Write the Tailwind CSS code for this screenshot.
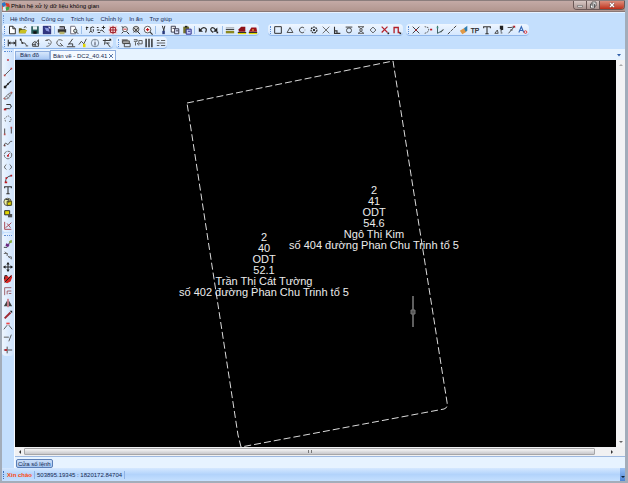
<!DOCTYPE html>
<html lang="vi">
<head>
<meta charset="utf-8">
<title>Phân hệ xử lý dữ liệu không gian</title>
<script src="https://cdn.jsdelivr.net/npm/@tailwindcss/browser@4"></script>
</head>
<body class="h-screen flex flex-col overflow-hidden bg-[#c4dffd] font-['Liberation_Sans',sans-serif] text-[6px] leading-[8px] text-[#142850] border-l-2 border-r-[3px] border-b-2 border-[#a3adba]">
<header class="-ml-[2px] -mr-[3px] h-[12px] shrink-0 flex items-center bg-linear-to-b from-[#c4aaa6] to-[#b2968f] border-t border-t-[#8b7d7c] border-b border-b-[#8a7876] pr-[3px]">
  <svg class="size-[11px]" viewBox="0 0 12 12" aria-hidden="true"><path d="M1 3l4-2 2 3-4 3z" fill="#2c77c8"/><path d="M6 2l4 1 1 4-4-1z" fill="#d93a26"/><path d="M2 7l4-1 2 4-4 1z" fill="#e8e9ee"/><path d="M6 7l4-1 0 3-3 2z" fill="#3aa344"/><path d="M0 5l3 0 0 4-2 0z" fill="#e24a31"/></svg>
  <h1 class="whitespace-nowrap text-black">Phân hệ xử lý dữ liệu không gian</h1>
  <div class="ml-auto flex h-[9px] self-start rounded-b-sm overflow-hidden border border-t-0 border-[#6a5755]">
    <button aria-label="Thu nhỏ" class="w-[13px] bg-linear-to-b from-[#d8c8c5] to-[#a99490] border-r border-[#6a5755] flex items-center justify-center"><svg class="size-[8px]" viewBox="0 0 8 8"><path d="M1.500 4.500h5v1.500h-5z" fill="#fff" stroke="#444" stroke-width=".5"/></svg></button>
    <button aria-label="Khôi phục" class="w-[13px] bg-linear-to-b from-[#d8c8c5] to-[#a99490] border-r border-[#6a5755] flex items-center justify-center"><svg class="size-[8px]" viewBox="0 0 8 8"><path d="M3 1h4v4H3zM1.500 3h4v4h-4z" fill="#fff" stroke="#444" stroke-width=".8"/></svg></button>
    <button aria-label="Đóng" class="w-[24px] bg-linear-to-b from-[#dc8c7b] to-[#bd2c16] flex items-center justify-center"><svg class="size-[8px]" viewBox="0 0 8 8"><path d="M2 2l4 4M6 2L2 6" stroke="#60332e" stroke-width="2.400"/><path d="M2 2l4 4M6 2L2 6" stroke="#fff" stroke-width="1.500"/></svg></button>
  </div>
</header>

<nav class="h-[12px] shrink-0 flex items-center gap-[7px] pl-px whitespace-nowrap border-t border-[#e7f1fe]" aria-label="Trình đơn">
  <span class="h-[8px] border-l border-dotted border-[#6f9ad8] -mr-px"></span>
  <button>Hệ thống</button><button>Công cụ</button><button>Trích lục</button><button>Chỉnh lý</button><button>In ấn</button><button>Trợ giúp</button>
</nav>

<div class="h-[12px] shrink-0 flex">
  <div role="toolbar" aria-label="Chuẩn" class="w-[257px] mr-[9px] flex items-center rounded-sm bg-linear-to-b from-[#eef6ff] to-[#d5e7fd] border-b border-[#8fb6ea]" data-icons="new open save image | print preview | pan zoomwin zoomin zoomout zoomall zoom | cut copy paste | undo redo | layer red1 red2"></div>
  <div role="toolbar" aria-label="Bắt điểm" class="w-[135px] mr-[3px] flex items-center rounded-sm bg-linear-to-b from-[#eef6ff] to-[#d5e7fd] border-b border-[#8fb6ea]" data-icons="square tri circle node cross perp tangent hour diamond nosnap magnet"></div>
  <div role="toolbar" aria-label="Biên tập" class="w-[123px] flex items-center rounded-sm bg-linear-to-b from-[#eef6ff] to-[#d5e7fd] border-b border-[#8fb6ea]" data-icons="x curve vert slash brush tp text north arrowred letter"></div>
</div>
<div class="h-[12px] mt-px shrink-0 flex">
  <div role="toolbar" aria-label="Đo đạc" class="w-[111px] mr-[3px] flex items-center rounded-sm bg-linear-to-b from-[#eef6ff] to-[#d5e7fd] border-b border-[#8fb6ea]" data-icons="dim poly area arcl arcr angle spark info move2"></div>
  <div role="toolbar" aria-label="Lớp" class="w-[51px] flex items-center rounded-sm bg-linear-to-b from-[#eef6ff] to-[#d5e7fd] border-b border-[#8fb6ea]" data-icons="stack link bars lines"></div>
</div>

<div class="flex-1 min-h-0 flex">
  <aside class="w-[12px] shrink-0 flex flex-col">
    <div role="toolbar" aria-label="Vẽ" class="h-[183px] flex flex-col items-center rounded-sm bg-linear-to-r from-[#eef6ff] to-[#cde2fc]" data-vertical data-icons="dot line line2 hatch loop poly5 rect wave circ ell arc text group group2 graph"></div>
    <div role="toolbar" aria-label="Sửa" class="mt-px h-[123px] flex flex-col items-center rounded-sm bg-linear-to-r from-[#eef6ff] to-[#cde2fc]" data-vertical data-icons="erase copy2 move rotate offset mirror scale trim extend break"></div>
  </aside>
  <main class="flex-1 min-w-0 flex flex-col border-l border-[#f7fbff]">
    <div class="h-[11px] shrink-0 flex items-end bg-[#e7f3ff] whitespace-nowrap">
      <button class="w-[35px] h-[9px] pl-[4px] text-left leading-[7px] border border-[#8eaede] bg-linear-to-b from-[#d7e7fb] to-[#a9c9f4]">Bản đồ</button>
      <button class="h-[10px] pl-[2px] pr-px gap-px flex items-center border border-b-0 border-[#8eaede] bg-[#f5faff]">Bản vẽ - DC2_40.41<svg class="size-[6px] shrink-0" viewBox="0 0 6 6"><path d="M1 1l4 4M5 1L1 5" stroke="#5b79aa"/></svg></button>
      <button aria-label="Danh sách thẻ" class="ml-auto mr-[4px] mb-[3px]"><svg class="size-[4px]" viewBox="0 0 4 4"><path d="M0 1h4L2 3.500z" fill="#315fa8"/></svg></button>
    </div>
    <div class="flex-1 min-h-0 flex">
      <div class="flex-1 min-w-0 bg-black overflow-hidden">
        <svg class="block w-full h-full" viewBox="0 0 601 387" preserveAspectRatio="xMinYMin slice" role="img" aria-label="Bản vẽ thửa đất">
          <g fill="none" stroke="#dcdcdc" stroke-dasharray="7 3"><path d="M172 43L378 1L432 342Q433 348 429 349L226 387L223 375Z"/></g>
          <g class="fill-[#ececec] text-[11px]" text-anchor="middle">
            <text><tspan x="359" y="134">2</tspan><tspan x="359" y="145">41</tspan><tspan x="359" y="156">ODT</tspan><tspan x="359" y="167">54.6</tspan><tspan x="359" y="178">Ngô Thị Kim</tspan><tspan x="359" y="189">số 404 đường Phan Chu Trinh tổ 5</tspan></text>
            <text><tspan x="249" y="181">2</tspan><tspan x="249" y="192">40</tspan><tspan x="249" y="203">ODT</tspan><tspan x="249" y="214">52.1</tspan><tspan x="249" y="225">Trần Thị Cát Tường</tspan><tspan x="249" y="236">số 402 đường Phan Chu Trinh tổ 5</tspan></text>
          </g>
          <path d="M398 236v31" stroke="#929292" stroke-width="1.300"/><path d="M396 250h4v4h-4z" fill="#555" stroke="#777"/>
        </svg>
      </div>
      <div class="w-[9px] shrink-0 bg-[#f3f3f4] flex flex-col justify-between items-center py-[3px]">
        <button aria-label="Cuộn lên"><svg class="size-[4px]" viewBox="0 0 4 4"><path d="M0 3h4L2 1z" fill="#aaa"/></svg></button>
        <button aria-label="Cuộn xuống"><svg class="size-[4px]" viewBox="0 0 4 4"><path d="M0 1h4L2 3z" fill="#666"/></svg></button>
      </div>
    </div>
    <div class="h-[9px] shrink-0 flex items-center bg-[#f1f1f2] pl-[3px] pr-[11px]">
      <button aria-label="Cuộn trái"><svg class="size-[4px]" viewBox="0 0 4 4"><path d="M3 0v4L1 2z" fill="#333"/></svg></button>
      <div class="ml-[2px] mr-[15px] flex-1 h-[7px] rounded-[1px] border border-[#a6a6a8] bg-linear-to-b from-[#f7f7f7] to-[#c6c6ca] flex items-center justify-center"><span class="h-[3px] w-[4px] border-x border-[#777]"></span></div>
      <button aria-label="Cuộn phải"><svg class="size-[4px]" viewBox="0 0 4 4"><path d="M1 0v4l2-2z" fill="#333"/></svg></button>
    </div>
    <div class="h-[12px] shrink-0 border-t border-[#9eb9e0] bg-[#e7f3ff] pl-px pt-[2px]">
      <button class="h-[9px] px-px flex items-center justify-center whitespace-nowrap rounded-[2px] border border-[#5b7fb8] bg-linear-to-b from-[#cbdff8] to-[#a5c5ef]">Cửa sổ lệnh</button>
    </div>
  </main>
</div>
<footer class="h-[13px] shrink-0 flex items-center whitespace-nowrap bg-linear-to-b from-[#d5e8ff] via-[#b2d3fb] to-[#c5e0ff]">
  <span class="h-[8px] ml-px border-l border-dotted border-[#3e6fb8]"></span>
  <span class="ml-[3px] w-[27px] text-[#ff4a10] font-bold">Xin chào</span>
  <span class="px-[2px] border-x border-[#8db2e6]">503895.19345 : 1820172.84704</span>
  <button aria-label="Tùy chọn" class="ml-auto w-[5px] h-full bg-linear-to-b from-[#9cc2f5] to-[#4d86d6] flex items-end justify-center pb-[2px]"><svg class="size-[4px]" viewBox="0 0 4 4"><path d="M0 1h4L2 3z" fill="#123"/></svg></button>
</footer>

<script>
const s = (d, c = '#222', w = 1.1) => `<path d="${d}" fill="none" stroke="${c}" stroke-width="${w}"/>`;
const f = (d, c = '#222') => `<path d="${d}" fill="${c}"/>`;
const R = '#c01820', Y = '#e3d600';
const icons = {
  new: ['Mới', f('M3 1.500h4l3 3v6H3z', '#fff') + s('M3 1.500h4l3 3v6H3zM7 1.500v3h3')],
  open: ['Mở', f('M1 4h3l1 1h4v5H1z', '#5b5510') + f('M3 6h8l-2 4H1z', '#c9c022') + s('M7 3q2-2 3 0')],
  save: ['Lưu', f('M1.500 1.500h9v9h-9z', '#245b58') + f('M3.500 1.500h5v4h-5z', '#e9f3f3') + f('M4 7.500h4v3H4z', '#111')],
  image: ['Ảnh', f('M1 1h10v10H1z', '#30357f') + f('M3 3l5 1 1 4-4-1z', '#8c98df') + f('M7 2l3 0 0 3z', '#dde')],
  print: ['In', f('M1 5h10v4H1z', '#333') + f('M3 2h6v3H3z', '#99a') + f('M3 8h6v3H3z', '#b7b36b') + s('M3 2h6v3')],
  preview: ['Xem trước', f('M2 1h6v10H2z', '#fff') + s('M2 1.500h5l1 2v7H2z', '#667') + '<circle cx="7.500" cy="7" r="2" fill="#cdd" stroke="#333"/>' + s('M9 8.500l2 2')],
  pan: ['Kéo', s('M1 3h3M2 2v4M6 4q3-3 5-1M7 4v3M5 9q2-3 4 0M10 5v3', '#333', 1.2)],
  zoomwin: ['Phóng vùng', s('M1 3h2M1 6h3M9 1v4M7 3h4M5 7l2-1 3 3M2 9h3', '#333', 1.2)],
  zoomin: ['Phóng to', f('M1 1h10v10H1z', '#efd0d4') + s('M6 1v10M1 6h10M3 3h6v6H3z', '#a32833', 1.2)],
  zoomout: ['Thu nhỏ', '<circle cx="6" cy="5" r="3" fill="#fff" stroke="#444"/>' + s('M4 5h4', R) + s('M8 8l3 3M2 2l2 1M2 10l2-2')],
  zoomall: ['Toàn bộ', '<circle cx="6" cy="5" r="3.500" fill="#ccc" stroke="#444"/>' + s('M3 3l6 6M9 3L3 9', '#444', 1.1) + s('M8 8l3 3')],
  zoom: ['Phóng', '<circle cx="5.500" cy="5.500" r="4" fill="#fff" stroke="#444"/>' + s('M3.500 5.500h4M5.500 3.500v4', R, 1.3) + s('M8.500 8.500l3 3', '#333', 1.4)],
  cut: ['Cắt', s('M4 1l2 6M7 1L5.500 7', '#333', 1.2) + f('M4 7h3v4H4z', '#28397b')],
  copy: ['Sao chép', f('M1.500 1.500h6v7h-6z', '#fff') + s('M1.500 1.500h5v7h-5zM3 4h3', '#334') + f('M5.500 4.500h6v6h-6z', '#dfe6ff') + s('M5.500 4.500h5v6h-5zM7 7h3', '#334')],
  paste: ['Dán', f('M1.500 2h7v8h-7z', '#77742c') + f('M3.500 1h3v2h-3z', '#222') + f('M5 5h6v6H5z', '#ccd4fa') + s('M5 5h6v6H5zM7 7.500h3', '#228')],
  undo: ['Hoàn tác', s('M3 6q4-5 7-1 0 2-1 4', '#333', 1.5) + f('M1 3v5h5z')],
  redo: ['Làm lại', s('M8 6Q4 1 2 5q0 2 3 4', '#333', 1.5) + f('M10 3v5H5z') + f('M9 8h2v2H9z')],
  layer: ['Lớp', f('M1 3h10v1H1z', '#888') + f('M1 5h10v1H1z') + f('M1 7h10v3H1z', '#8b8820')],
  red1: ['Thửa', f('M1 9h10v2H1z', Y) + f('M2 8V5l3-3h5v6z', '#8d1118') + s('M1 9h10')],
  red2: ['Nhà', f('M1 9h10v2H1z', Y) + f('M1 8l3-5h6l1 5z', '#9d1118') + f('M5 5h2v2H5z', '#e8b040') + s('M1 9h10')],
  square: ['Đầu mút', s('M2 2h8v8H2z', '#333', 1.2)],
  tri: ['Trung điểm', s('M6 3L2.500 9h7z', '#444')],
  circle: ['Tâm', s('M8.500 3.500Q6 1.500 4 3.500Q1.500 6 4 8.500Q6 10.500 8.500 8.500', '#444') + s('M9.500 5.500v1', '#888')],
  node: ['Nút', '<circle cx="6" cy="6" r="3.500" fill="none" stroke="#222" stroke-width="1.400" stroke-dasharray="2 1"/>' + s('M4.500 4.500l3 3M7.500 4.500l-3 3')],
  cross: ['Giao điểm', s('M2 2l8 8M10 2l-8 8', '#666')],
  perp: ['Vuông góc', s('M3 2v8h7M3 7h3v3', '#333', 1.3)],
  tangent: ['Tiếp tuyến', s('M2 2.500h8', '#333') + '<circle cx="6" cy="6.500" r="3" fill="none" stroke="#333"/>'],
  hour: ['Gần nhất', s('M2.500 2h7L4 6l5.500 4h-7L8 6z', '#555')],
  diamond: ['Góc phần tư', s('M6 2.500L9.500 6 6 9.500 2.500 6z', '#555')],
  nosnap: ['Bỏ bắt điểm', s('M2 2l7 7M9 2L2 9', '#b3202a', 1.4) + f('M9 9h2v2H9z')],
  magnet: ['Nam châm', s('M2.500 10V3h5v6h2', '#b3202a', 1.6) + f('M9 9h2v2H9z')],
  x: ['Giao', s('M2 2l8 8M10 2l-8 8', '#333') + f('M5 5h2v2H5z', R)],
  curve: ['Đường cong', '<path d="M2 2l4 1 1 3-2 3-3 1" fill="none" stroke="#444" stroke-dasharray="2 1"/>' + f('M8.500 4.500h2.500v2H8.500z', R)],
  vert: ['Đỉnh', s('M3 1v9l7-4', '#355') + f('M2 2h2v2H2z', '#3a8e7b') + s('M7 9l3-4', '#555')],
  slash: ['Đoạn', s('M1 11l3-3M5 7l2-2M8 4l3-3', '#333')],
  brush: ['Chổi', f('M1 7l5-3 3 4-5 3z', '#e09845') + f('M6 4l4-3v6l-2 1z', '#307eaf')],
  tp: ['TP', '<text x="6" y="9" text-anchor="middle" font-size="8" fill="#222" stroke="#222" stroke-width=".3">TP</text>'],
  text: ['Chữ', s('M2 4V2h8v2M6 2v8.500M4 10.500h4', '#333', 1.3)],
  north: ['Hướng', s('M1 10l3-4 1 4z', '#444') + f('M7 1h4v5H9v2H8V5H7z') + f('M8 9h2v1H8z')],
  arrowred: ['Mũi tên', s('M2 3h4L10 2 3 10M5 6h3', '#444') + f('M8 1h3v3z', R)],
  letter: ['Kiểu chữ', s('M1 9l3-7 3 7M2 6.500h4', '#3366b5', 1.3) + '<circle cx="9" cy="8.500" r="1.600" fill="none" stroke="#d22"/>'],
  dim: ['Kích thước', s('M1.500 2v8M10.500 2v8M2 6h8', '#222', 1.2) + f('M2 6l2-2v4zM10 6L8 4v4z')],
  poly: ['Đa tuyến', s('M2 2l2 4h3l2 3M8 9.500h3', '#444') + f('M1 1h2v2H1zM3 5h2v2H3z')],
  area: ['Diện tích', s('M2 10V6l3-2 1 2 3-4v8zM1 8h5M5 6v4M7 7h3', '#444')],
  arcl: ['Xoay trái', s('M3 3q5-3 7 2-1 5-6 5M3 3h3M6 6l2 1', '#666')],
  arcr: ['Xoay phải', s('M9 3Q3 0 2 6q2 5 7 3M6 6l4 4', '#555')],
  angle: ['Góc', s('M8 1L3 8M1 10.500h10M3 7h5v3', '#333')],
  spark: ['Điểm đo', s('M1 8l3-4 3 3 3-6', '#444') + f('M6 7h3v4H6z', Y)],
  info: ['Thông tin', '<circle cx="6" cy="6" r="4.500" fill="none" stroke="#678"/>' + s('M6 5v4M6 3v1', '#334')],
  move2: ['Dời', s('M1 3h9M4 1l-1 7M4 6h5M6 6l4 5', '#333') + f('M8 1h3v3z')],
  stack: ['Chồng lớp', f('M1 1.500h7v4H1z', '#777') + f('M2 3.500h8v4H2z', '#bbb') + s('M2 3.500h8v3H2zM4 6.500h7v4H4z', '#444')],
  link: ['Liên kết', s('M1 2h4v2H1M3 5v4M7 3h4v4H7zM5 6l2 3', '#555')],
  bars: ['Cột', s('M2.500 1v10M6 1v10M9.500 1v10', '#111', 1.5)],
  lines: ['Hàng', s('M1 3h3M6 3h5M1 6h10M1 9h3M6 9h5', '#444', 1)],
  dot: ['Điểm', f('M5 5h2v2H5z', R)],
  line: ['Đường', s('M2 10l8-8', '#555') + f('M1 9h2v2H1zM9 1h2v2H9z', '#b44')],
  line2: ['Tia', s('M2 10l8-8', '#222', 1.4) + f('M1 8h3v3H1zM5 5h2v2H5z')],
  hatch: ['Tô', s('M1 9l6-6 4-1-5 7-4 1zM4 6l3 3M6 4l3 2', '#777') + f('M1 8h2v2H1zM9 1h2v2H9z', '#b66')],
  loop: ['Tuyến', s('M4 3h5l1 3-2 2H2', '#333', 1.2) + f('M1 8h3v2H1z', R)],
  poly5: ['Đa giác', '<path d="M3 9L2 5l4-3 4 3-1 4H7" fill="none" stroke="#666" stroke-dasharray="2 1"/>'],
  rect: ['Chữ nhật', s('M2 3v7M10 2v7', '#444') + f('M1 9h2v2H1zM9 1h2v2H9z', '#b55')],
  wave: ['Uốn', s('M1 9l2-3 3 2 3-4h2', '#555') + f('M1 8h2v2H1z', '#744')],
  circ: ['Hình tròn', '<circle cx="6" cy="6" r="4.500" fill="none" stroke="#555" stroke-dasharray="4 1"/>' + s('M5 7l3-3', R) + f('M5 6h2v2H5z', R)],
  ell: ['Elip', s('M4 3L2 5v2l2 2M8 3l2 2v2L8 9', '#555')],
  arc: ['Cung', s('M3 10q0-7 7-8', '#333') + f('M2 9h3v2H2zM9 1h2v2H9zM3 4h2v2H3z', R)],
  group: ['Nhóm', '<circle cx="5.500" cy="6" r="4.500" fill="#eceea0" stroke="#444"/>' + f('M5 5h6v5H5z', Y) + s('M5 5h5v5H5zM3 3h4v4', '#333')],
  group2: ['Khối', f('M2 2h6v5H2z', Y) + s('M2 2h6v5H2z') + f('M6 6h5v4H6z', '#555')],
  graph: ['Biểu đồ', s('M2 1v9h8M3 8l4-3 3-3M5 3l4 5', '#a3404c')],
  erase: ['Xóa', s('M1 10h4M6 7l4-5', '#333') + f('M4 5l4 2-2 3-3-2z', '#6b2b83') + f('M7 3l3-2 1 3-2 1z', '#8ab13c')],
  copy2: ['Nhân bản', s('M1 3h4v3M2 1l4 3M6 7h4v3M6 6l3 3', '#666')],
  move: ['Di chuyển', s('M6 1v10M1 6h10', '#222', 1.2) + f('M6 0l2 3H4zM6 12L4 9h4zM0 6l3-2v4zM12 6L9 4v4z')],
  rotate: ['Xoay', '<path d="M2 2h3l2 2 3-3 1 3-2 5-4 2-3-1-1-4z" fill="#d62725"/>' + s('M2 2h3M2 10l8-8M2 3v3', '#222', 1.2)],
  offset: ['Song song', s('M2 11V2h8M5 10V6h5M7 9h3', '#9a5961')],
  mirror: ['Đối xứng', f('M5 3v7H1zM7 3v7h4z', '#444') + s('M6 1v10', R)],
  scale: ['Tỷ lệ', s('M2 10l7-7', '#9e2a32', 2.4) + f('M8 1h3v3z')],
  trim: ['Cắt tỉa', s('M1 10l4-5M11 10L7 5', '#555') + f('M4 2h4v2H4z', '#e44')],
  extend: ['Kéo dài', s('M1 5h6M10 2L7 10', '#555')],
  break: ['Ngắt', s('M1 6h3M6 6h5M5 2v8', '#444') + f('M2 5h3v2H2z', R)],
};
document.querySelectorAll('[data-icons]').forEach(bar => {
  const v = 'vertical' in bar.dataset;
  bar.innerHTML = (v
    ? '<span class="w-[8px] my-[2px] border-t border-dotted border-[#5d8ed6]"></span>'
    : '<span class="h-[8px] mr-px ml-[2px] border-l border-dotted border-[#5d8ed6]"></span>')
    + bar.dataset.icons.split(' ').map(n => n === '|'
      ? '<span class="w-[4px] h-[8px] flex justify-center"><span class="border-l border-[#9dbfe9]"></span></span>'
      : `<button class="flex-1 min-w-0 min-h-0 flex items-center justify-center" aria-label="${icons[n][0]}"><svg class="size-[10px] shrink-0" viewBox="0 0 12 12">${icons[n][1]}</svg></button>`).join('');
});
</script>
</body>
</html>
